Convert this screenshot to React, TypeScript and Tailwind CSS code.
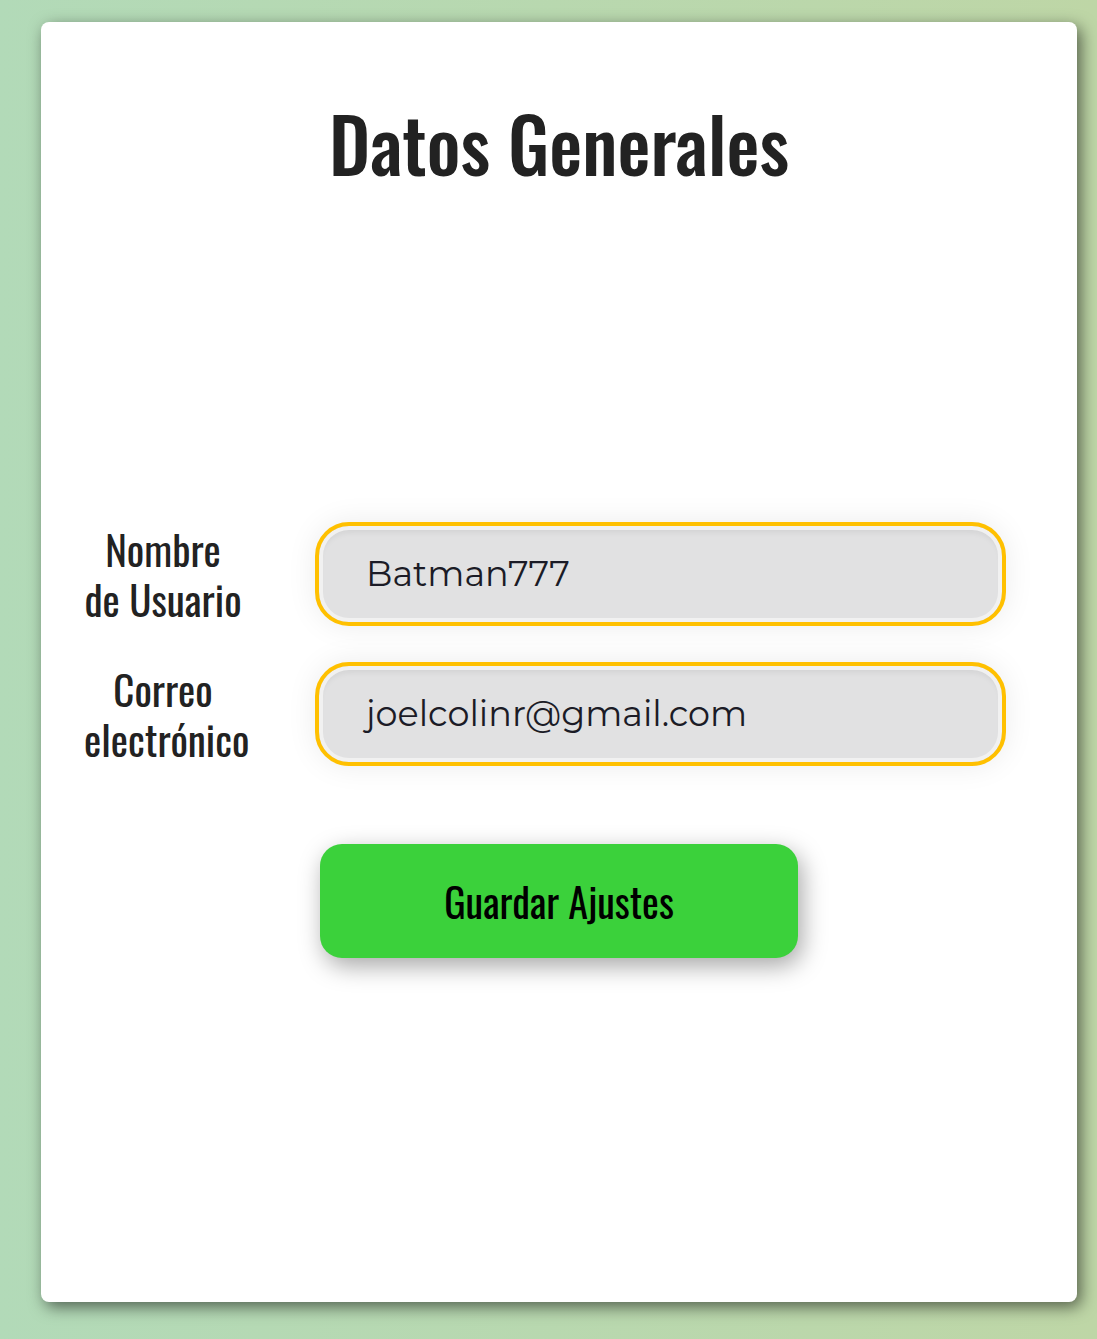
export default function App() {
  return (
    <div className="h-[1339px] w-full bg-linear-to-r from-[#b2dab8] to-[#bed6a6] pl-[41px] pt-[22px]">
      <div className="flex h-[1280px] w-[1036px] flex-col rounded-lg bg-white shadow-[4px_5px_16px_rgba(0,0,0,0.55)]">
        <h1 className="mt-[84px] text-center font-['Oswald',sans-serif] text-[74px] font-medium leading-none text-[#222222]">
          Datos Generales
        </h1>

        <div className="mt-[342px] flex flex-col gap-[36px]">
          <div className="flex items-center">
            <div className="ml-[43px] w-[158px] text-center font-['Oswald',sans-serif] text-[41px] leading-[50px] text-[#222222]">
              Nombre
              <br />
              de Usuario
            </div>
            <div className="ml-[73px] flex h-[104px] w-[691px] items-center rounded-[34px] border-4 border-[#ffc000] bg-[#e1e1e2] pl-[47px] font-['Montserrat',sans-serif] text-[35px] text-[#1b1b26] shadow-[inset_0_0_0_4px_#f1f1f1,inset_0_6px_6px_rgba(0,0,0,0.07),0_0_30px_rgba(0,0,0,0.08)]">
              Batman777
            </div>
          </div>
          <div className="flex items-center">
            <div className="ml-[43px] w-[158px] text-center font-['Oswald',sans-serif] text-[41px] leading-[50px] text-[#222222]">
              Correo
              <br />
              electrónico
            </div>
            <div className="ml-[73px] flex h-[104px] w-[691px] items-center rounded-[34px] border-4 border-[#ffc000] bg-[#e1e1e2] pl-[47px] font-['Montserrat',sans-serif] text-[35px] text-[#1b1b26] shadow-[inset_0_0_0_4px_#f1f1f1,inset_0_6px_6px_rgba(0,0,0,0.07),0_0_30px_rgba(0,0,0,0.08)]">
              joelcolinr@gmail.com
            </div>
          </div>
        </div>

        <div className="mt-[78px] ml-[279px]">
          <button className="flex h-[114px] w-[478px] items-center justify-center rounded-[22px] bg-[#3bd13b] font-['Oswald',sans-serif] text-[40px] text-black shadow-[4px_8px_24px_rgba(0,0,0,0.35)]">
            Guardar Ajustes
          </button>
        </div>
      </div>
    </div>
  );
}
